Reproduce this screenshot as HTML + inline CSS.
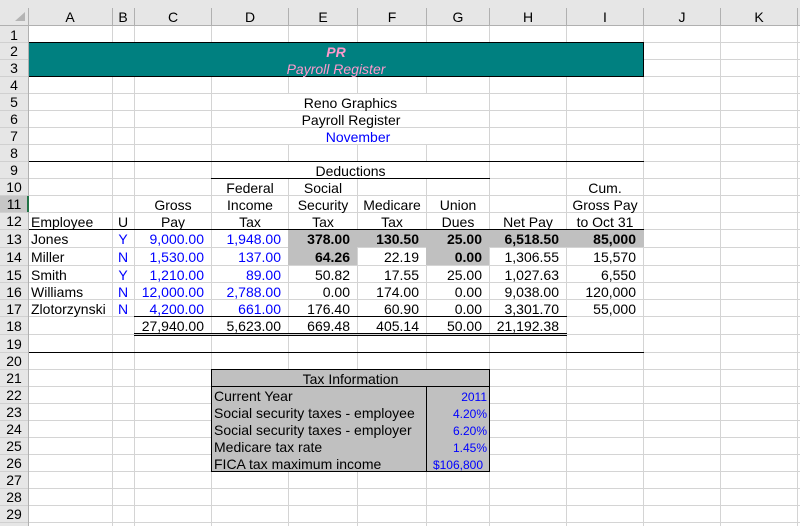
<!DOCTYPE html>
<html><head><meta charset="utf-8"><style>
html,body{margin:0;padding:0;width:800px;height:526px;overflow:hidden;background:#fff}
svg{display:block}
text{font-family:"Liberation Sans",Arial,sans-serif;font-size:14px;fill:#000}
.m{text-anchor:middle}.r{text-anchor:end}.b{fill:#00f}.h{fill:#111}
.bd{font-weight:bold}.p{fill:#ff99cc;font-style:italic}.s{font-size:12px}
</style></head><body>
<svg width="800" height="526" viewBox="0 0 800 526" xmlns="http://www.w3.org/2000/svg" shape-rendering="crispEdges">
<rect width="800" height="526" fill="#fff"/>
<rect width="800" height="25" fill="#e6e6e6"/>
<rect y="25" width="28" height="501" fill="#e6e6e6"/>
<rect y="196" width="28" height="16" fill="#c6c6c6"/>
<polygon points="15,21 25,21 25,12" fill="#b4b4b4" shape-rendering="auto"/>
<g fill="#d4d4d4">
<rect x="29" y="42" width="771" height="1"/><rect x="29" y="59" width="771" height="1"/><rect x="29" y="76" width="771" height="1"/><rect x="29" y="93" width="771" height="1"/><rect x="29" y="110" width="771" height="1"/><rect x="29" y="127" width="771" height="1"/><rect x="29" y="144" width="771" height="1"/><rect x="29" y="161" width="771" height="1"/><rect x="29" y="178" width="771" height="1"/><rect x="29" y="195" width="771" height="1"/><rect x="29" y="212" width="771" height="1"/><rect x="29" y="229" width="771" height="1"/><rect x="29" y="247" width="771" height="1"/><rect x="29" y="265" width="771" height="1"/><rect x="29" y="282" width="771" height="1"/><rect x="29" y="299" width="771" height="1"/><rect x="29" y="316" width="771" height="1"/><rect x="29" y="334" width="771" height="1"/><rect x="29" y="352" width="771" height="1"/><rect x="29" y="369" width="771" height="1"/><rect x="29" y="386" width="771" height="1"/><rect x="29" y="403" width="771" height="1"/><rect x="29" y="420" width="771" height="1"/><rect x="29" y="437" width="771" height="1"/><rect x="29" y="454" width="771" height="1"/><rect x="29" y="471" width="771" height="1"/><rect x="29" y="488" width="771" height="1"/><rect x="29" y="505" width="771" height="1"/><rect x="29" y="522" width="771" height="1"/>
<rect x="112" y="25" width="1" height="501"/><rect x="134" y="25" width="1" height="501"/><rect x="211" y="25" width="1" height="501"/><rect x="288" y="25" width="1" height="501"/><rect x="357" y="25" width="1" height="501"/><rect x="426" y="25" width="1" height="501"/><rect x="489" y="25" width="1" height="501"/><rect x="566" y="25" width="1" height="501"/><rect x="643" y="25" width="1" height="501"/><rect x="720" y="25" width="1" height="501"/><rect x="797" y="25" width="1" height="501"/>
</g>
<!-- merged cells hide gridlines -->
<rect x="212" y="94" width="277" height="50" fill="#fff"/>
<rect x="212" y="162" width="277" height="16" fill="#fff"/>
<rect x="212" y="110" width="277" height="1" fill="#d4d4d4"/>
<rect x="212" y="127" width="277" height="1" fill="#d4d4d4"/>
<!-- header separators -->
<g fill="#b0b0b0">
<rect x="0" y="25" width="800" height="1"/>
<rect x="28" y="8" width="1" height="518"/>
<rect x="112" y="8" width="1" height="17"/><rect x="134" y="8" width="1" height="17"/><rect x="211" y="8" width="1" height="17"/><rect x="288" y="8" width="1" height="17"/><rect x="357" y="8" width="1" height="17"/><rect x="426" y="8" width="1" height="17"/><rect x="489" y="8" width="1" height="17"/><rect x="566" y="8" width="1" height="17"/><rect x="643" y="8" width="1" height="17"/><rect x="720" y="8" width="1" height="17"/><rect x="797" y="8" width="1" height="17"/>
</g>
<g fill="#d0d0d0">
<rect y="42" width="28" height="1"/><rect y="59" width="28" height="1"/><rect y="76" width="28" height="1"/><rect y="93" width="28" height="1"/><rect y="110" width="28" height="1"/><rect y="127" width="28" height="1"/><rect y="144" width="28" height="1"/><rect y="161" width="28" height="1"/><rect y="178" width="28" height="1"/><rect y="195" width="28" height="1"/><rect y="212" width="28" height="1"/><rect y="229" width="28" height="1"/><rect y="247" width="28" height="1"/><rect y="265" width="28" height="1"/><rect y="282" width="28" height="1"/><rect y="299" width="28" height="1"/><rect y="316" width="28" height="1"/><rect y="334" width="28" height="1"/><rect y="352" width="28" height="1"/><rect y="369" width="28" height="1"/><rect y="386" width="28" height="1"/><rect y="403" width="28" height="1"/><rect y="420" width="28" height="1"/><rect y="437" width="28" height="1"/><rect y="454" width="28" height="1"/><rect y="471" width="28" height="1"/><rect y="488" width="28" height="1"/><rect y="505" width="28" height="1"/><rect y="522" width="28" height="1"/>
</g>
<rect x="27" y="196" width="2" height="16" fill="#217346"/>
<!-- fills -->
<rect x="29" y="42" width="615" height="35" fill="#008080"/>
<rect x="288" y="230" width="356" height="17" fill="#c0c0c0"/>
<rect x="288" y="247" width="69" height="18" fill="#c0c0c0"/>
<rect x="426" y="247" width="63" height="18" fill="#c0c0c0"/>
<rect x="211" y="369" width="279" height="103" fill="#c0c0c0"/>
<!-- black borders -->
<g fill="#000">
<rect x="29" y="42" width="615" height="1"/><rect x="29" y="76" width="615" height="1"/><rect x="643" y="42" width="1" height="35"/>
<rect x="29" y="161" width="615" height="1"/>
<rect x="211" y="178" width="279" height="1"/>
<rect x="29" y="229" width="615" height="1"/>
<rect x="134" y="316" width="433" height="1"/>
<rect x="134" y="333" width="433" height="1"/><rect x="134" y="335" width="433" height="1"/>
<rect x="29" y="352" width="615" height="1"/>
<rect x="211" y="369" width="279" height="1"/><rect x="211" y="386" width="279" height="1"/><rect x="211" y="471" width="279" height="1"/>
<rect x="211" y="369" width="1" height="103"/><rect x="489" y="369" width="1" height="103"/><rect x="426" y="386" width="1" height="85"/>
</g>
<!-- column headers -->
<g class="h">
<text class="m" x="70" y="22">A</text><text class="m" x="123" y="22">B</text><text class="m" x="173" y="22">C</text><text class="m" x="250" y="22">D</text><text class="m" x="323" y="22">E</text><text class="m" x="392" y="22">F</text><text class="m" x="458" y="22">G</text><text class="m" x="528" y="22">H</text><text class="m" x="605" y="22">I</text><text class="m" x="682" y="22">J</text><text class="m" x="759" y="22">K</text>
</g>
<!-- row headers -->
<g>
<text class="m" x="14" y="40">1</text><text class="m" x="14" y="56">2</text><text class="m" x="14" y="73">3</text><text class="m" x="14" y="90">4</text><text class="m" x="14" y="107">5</text><text class="m" x="14" y="124">6</text><text class="m" x="14" y="141">7</text><text class="m" x="14" y="158">8</text><text class="m" x="14" y="175">9</text><text class="m" x="14" y="192">10</text><text class="m" x="14" y="209">11</text><text class="m" x="14" y="226">12</text><text class="m" x="14" y="244">13</text><text class="m" x="14" y="262">14</text><text class="m" x="14" y="280">15</text><text class="m" x="14" y="297">16</text><text class="m" x="14" y="314">17</text><text class="m" x="14" y="331">18</text><text class="m" x="14" y="349">19</text><text class="m" x="14" y="366">20</text><text class="m" x="14" y="383">21</text><text class="m" x="14" y="400">22</text><text class="m" x="14" y="417">23</text><text class="m" x="14" y="434">24</text><text class="m" x="14" y="451">25</text><text class="m" x="14" y="468">26</text><text class="m" x="14" y="485">27</text><text class="m" x="14" y="502">28</text><text class="m" x="14" y="519">29</text>
</g>
<!-- titles -->
<text class="m p bd" x="336" y="57">PR</text>
<text class="m p" x="336" y="74">Payroll Register</text>
<text class="m" x="350.5" y="108">Reno Graphics</text>
<text class="m" x="351" y="125">Payroll Register</text>
<text class="m b" x="358" y="142">November</text>
<text class="m" x="350.5" y="176">Deductions</text>
<!-- table heads -->
<text class="m" x="250" y="193">Federal</text><text class="m" x="323" y="193">Social</text><text class="m" x="605" y="193">Cum.</text>
<text class="m" x="173" y="210">Gross</text><text class="m" x="250" y="210">Income</text><text class="m" x="323" y="210">Security</text><text class="m" x="392" y="210">Medicare</text><text class="m" x="458" y="210">Union</text><text class="m" x="605" y="210">Gross Pay</text>
<text x="31" y="227">Employee</text><text class="m" x="123" y="227">U</text><text class="m" x="173" y="227">Pay</text><text class="m" x="250" y="227">Tax</text><text class="m" x="323" y="227">Tax</text><text class="m" x="392" y="227">Tax</text><text class="m" x="458" y="227">Dues</text><text class="m" x="528" y="227">Net Pay</text><text class="m" x="605" y="227">to Oct 31</text>
<!-- row 13 -->
<text x="31" y="244">Jones</text><text class="m b" x="123" y="244">Y</text><text class="r b" x="204" y="244">9,000.00</text><text class="r b" x="281" y="244">1,948.00</text><text class="r bd" x="350" y="244">378.00</text><text class="r bd" x="419" y="244">130.50</text><text class="r bd" x="482" y="244">25.00</text><text class="r bd" x="559" y="244">6,518.50</text><text class="r bd" x="636" y="244">85,000</text>
<!-- row 14 -->
<text x="31" y="262">Miller</text><text class="m b" x="123" y="262">N</text><text class="r b" x="204" y="262">1,530.00</text><text class="r b" x="281" y="262">137.00</text><text class="r bd" x="350" y="262">64.26</text><text class="r" x="419" y="262">22.19</text><text class="r bd" x="482" y="262">0.00</text><text class="r" x="559" y="262">1,306.55</text><text class="r" x="636" y="262">15,570</text>
<!-- row 15 -->
<text x="31" y="280">Smith</text><text class="m b" x="123" y="280">Y</text><text class="r b" x="204" y="280">1,210.00</text><text class="r b" x="281" y="280">89.00</text><text class="r" x="350" y="280">50.82</text><text class="r" x="419" y="280">17.55</text><text class="r" x="482" y="280">25.00</text><text class="r" x="559" y="280">1,027.63</text><text class="r" x="636" y="280">6,550</text>
<!-- row 16 -->
<text x="31" y="297">Williams</text><text class="m b" x="123" y="297">N</text><text class="r b" x="204" y="297">12,000.00</text><text class="r b" x="281" y="297">2,788.00</text><text class="r" x="350" y="297">0.00</text><text class="r" x="419" y="297">174.00</text><text class="r" x="482" y="297">0.00</text><text class="r" x="559" y="297">9,038.00</text><text class="r" x="636" y="297">120,000</text>
<!-- row 17 -->
<text x="31" y="314">Zlotorzynski</text><text class="m b" x="123" y="314">N</text><text class="r b" x="204" y="314">4,200.00</text><text class="r b" x="281" y="314">661.00</text><text class="r" x="350" y="314">176.40</text><text class="r" x="419" y="314">60.90</text><text class="r" x="482" y="314">0.00</text><text class="r" x="559" y="314">3,301.70</text><text class="r" x="636" y="314">55,000</text>
<!-- row 18 -->
<text class="r" x="204" y="331">27,940.00</text><text class="r" x="281" y="331">5,623.00</text><text class="r" x="350" y="331">669.48</text><text class="r" x="419" y="331">405.14</text><text class="r" x="482" y="331">50.00</text><text class="r" x="559" y="331">21,192.38</text>
<!-- tax box -->
<text class="m" x="350.5" y="384">Tax Information</text>
<text x="214" y="401">Current Year</text><text class="r b s" x="487" y="401">2011</text>
<text x="214" y="418">Social security taxes - employee</text><text class="r b s" x="487" y="418">4.20%</text>
<text x="214" y="435">Social security taxes - employer</text><text class="r b s" x="487" y="435">6.20%</text>
<text x="214" y="452">Medicare tax rate</text><text class="r b s" x="487" y="452">1.45%</text>
<text x="214" y="469">FICA tax maximum income</text><text class="r b s" x="483" y="469">$106,800</text>
</svg>
</body></html>
